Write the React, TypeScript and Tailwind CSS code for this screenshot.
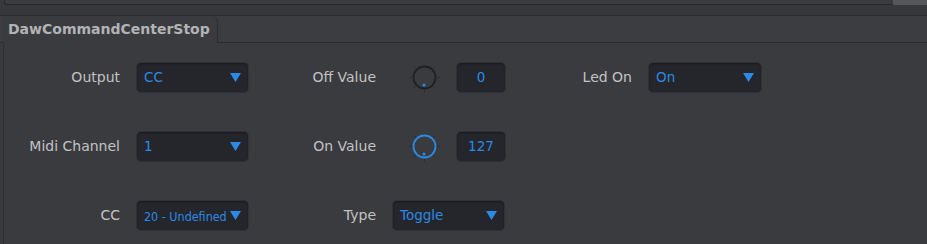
import React from 'react';

const font = { fontFamily: '"DejaVu Sans", Verdana, sans-serif' };

const Caret = () => (
  <svg width="11" height="9" viewBox="0 0 11 9" className="shrink-0">
    <path d="M0 0 H11 L5.5 9 Z" fill="#2b8ae6" />
  </svg>
);

const Select = ({ value, narrow }: { value: string; narrow?: boolean }) => (
  <div className="flex h-[31px] w-full items-center justify-between rounded-[5px] border border-[#2f3136] bg-[#24262b] pl-[7px] pr-[7px] shadow-[inset_0_1px_2px_rgba(0,0,0,0.35)]">
    {narrow ? (
      <span className="w-[76px] whitespace-nowrap">
        <span className="inline-block origin-left scale-x-[0.86] text-[13px] text-[#2b8ae6]">{value}</span>
      </span>
    ) : (
      <span className="text-[13.5px] text-[#2b8ae6]">{value}</span>
    )}
    <Caret />
  </div>
);

const Knob = ({ on }: { on?: boolean }) => {
  const ticks = [-135, -90, -45, 0, 45, 90, 135];
  return (
    <svg width="31" height="31" viewBox="0 0 31 31" className="shrink-0">
      {ticks.map((a) => {
        const r = (a * Math.PI) / 180;
        const x1 = 15.5 + Math.sin(r) * 12.5;
        const y1 = 15.5 + Math.cos(r) * 12.5;
        const x2 = 15.5 + Math.sin(r) * 15;
        const y2 = 15.5 + Math.cos(r) * 15;
        return <line key={a} x1={x1} y1={y1} x2={x2} y2={y2} stroke="#2a2b2f" strokeWidth="1" />;
      })}
      <circle cx="15.5" cy="15.5" r="11" fill="#3a3b3f" stroke={on ? '#2b8ae6' : '#1f2024'} strokeWidth="1.8" />
      <circle cx="15" cy="23" r="1.5" fill="#2b8ae6" />
    </svg>
  );
};

const NumBox = ({ value }: { value: string }) => (
  <div className="flex h-[31px] w-[50px] items-center justify-center rounded-[5px] border border-[#2f3136] bg-[#24262b] text-[13.5px] text-[#2b8ae6] shadow-[inset_0_1px_2px_rgba(0,0,0,0.35)]">
    {value}
  </div>
);

const Label = ({ children }: { children: React.ReactNode }) => (
  <div className="flex items-center justify-end pr-4 text-[14px] text-[#c2c2c4]">{children}</div>
);

const KnobField = ({ value, on }: { value: string; on?: boolean }) => (
  <div className="flex items-center pl-[17px]">
    <Knob on={on} />
    <div className="ml-[16px]">
      <NumBox value={value} />
    </div>
  </div>
);

export default function App() {
  return (
    <div className="h-[244px] w-[927px] overflow-hidden bg-[#3a3b3f]" style={font}>
      {/* upper panel edge */}
      <div className="flex h-[15px] bg-[#37383c]">
        <div className="ml-[4px] h-[5px] flex-1 rounded-bl-[3px] border-b border-l border-[#27282b] bg-[#3b3c40]" />
        <div className="h-[5px] w-[34px] bg-[#55565a]" />
      </div>
      {/* tab bar */}
      <div className="flex h-[28px] border-t border-b border-[#2a2b2f] bg-[#3c3d41]">
        <div className="-mb-px ml-[3px] flex w-[215px] items-center rounded-tr-[6px] border-r border-[#2a2b2f] bg-[#3a3b3f] pl-[5px] text-[14px] font-bold text-[#b3b3b5]">
          DawCommandCenterStop
        </div>
      </div>
      {/* content */}
      <div className="ml-[3px] h-full border-l border-[#2e2f33] pt-[19px]">
        <div className="grid grid-cols-[132px_113px_143px_113px_143px_114px] grid-rows-[31px_31px_31px] gap-y-[38px]">
          <Label>Output</Label>
          <Select value="CC" />
          <Label>Off Value</Label>
          <KnobField value="0" />
          <Label>Led On</Label>
          <Select value="On" />

          <Label>Midi Channel</Label>
          <Select value="1" />
          <Label>On Value</Label>
          <KnobField value="127" on />
          <div />
          <div />

          <Label>CC</Label>
          <Select value="20 - Undefined" narrow />
          <Label>Type</Label>
          <Select value="Toggle" />
          <div />
          <div />
        </div>
      </div>
    </div>
  );
}
